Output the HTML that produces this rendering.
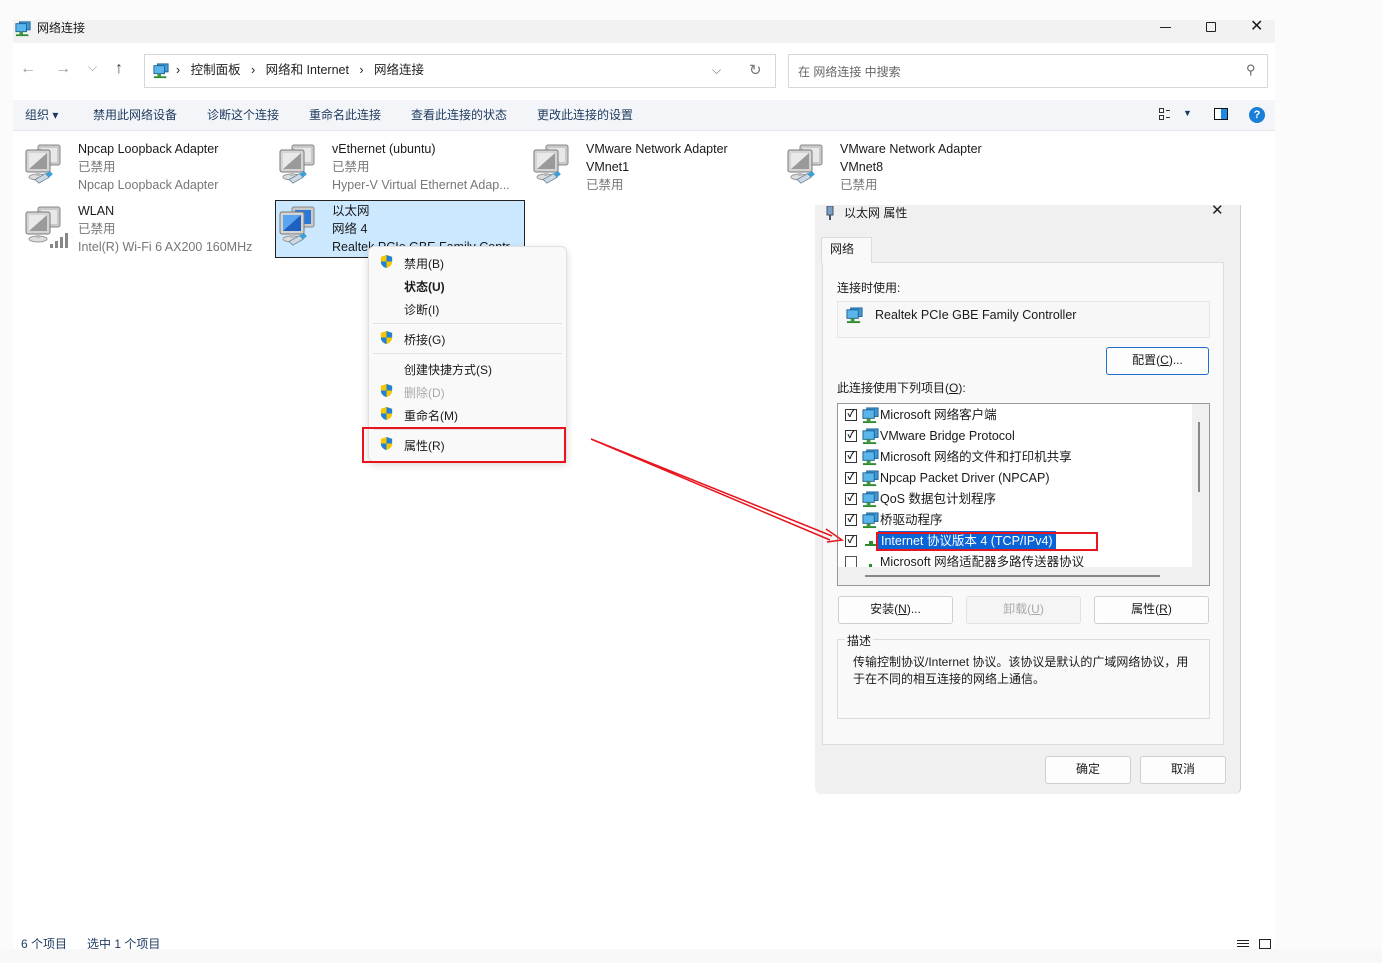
<!DOCTYPE html>
<html><head><meta charset="utf-8">
<style>
*{margin:0;padding:0;box-sizing:border-box}
body{width:1382px;height:963px;background:#fbfbfb;position:relative;overflow:hidden;font-family:"Liberation Sans","Noto Sans CJK SC",sans-serif;font-size:12px;color:#1a1a1a}
.a{position:absolute;white-space:nowrap}
#win{position:absolute;left:13px;top:20px;width:1262px;height:929px;background:#fff}
.g{color:#777}
.item{position:absolute;line-height:18px;font-size:12.5px}
.mi{position:absolute;left:404px;font-size:12px}
.sh{position:absolute;left:379px}
.btn{position:absolute;background:#fdfdfd;border:1px solid #cfcfcf;border-radius:3px;text-align:center;font-size:12px;line-height:25px}
.row{position:absolute;left:845px;font-size:12.5px;height:20px;line-height:20px}
.cb{position:absolute;left:0;top:4px;width:12px;height:12px;border:1px solid #333;background:#fff;font-size:10px;line-height:10px;text-align:center;font-weight:bold}
.ni{position:absolute;left:17px;top:2px}
.rt{position:absolute;left:35px;top:0}
.tb{position:absolute;top:107px;font-size:12px;line-height:17px;color:#1e3a5f}
</style></head><body>
<svg width="0" height="0" style="position:absolute">
<defs>
<symbol id="pc" viewBox="0 0 48 48">
<rect x="16" y="3" width="22" height="20" rx="2" fill="#c9c9c9" stroke="#888"/>
<rect x="19" y="6" width="16" height="14" fill="#e8e8e8"/>
<rect x="4" y="8" width="24" height="22" rx="2" fill="#d4d4d4" stroke="#777"/>
<rect x="7" y="11" width="18" height="16" fill="#9a9a9a"/>
<path d="M7 11h18L7 27z" fill="#e9e9e9"/>
<ellipse cx="16" cy="35" rx="9" ry="3" fill="#ddd" stroke="#999"/>
<rect x="14" y="30" width="4" height="4" fill="#bbb"/>
</symbol>
<symbol id="pcb" viewBox="0 0 48 48">
<rect x="16" y="3" width="22" height="20" rx="2" fill="#c9c9c9" stroke="#888"/>
<rect x="19" y="6" width="16" height="14" fill="#2b78d8"/>
<rect x="4" y="8" width="24" height="22" rx="2" fill="#d4d4d4" stroke="#777"/>
<rect x="7" y="11" width="18" height="16" fill="#1e5fbf"/>
<path d="M7 11h18L7 27z" fill="#5aa5f0"/>
<ellipse cx="16" cy="35" rx="9" ry="3" fill="#ddd" stroke="#999"/>
<rect x="14" y="30" width="4" height="4" fill="#bbb"/>
</symbol>
<symbol id="plug" viewBox="0 0 30 20">
<path d="M3 12l14-8 5 5-14 8z" fill="#cfd8e0" stroke="#5a7a95"/>
<path d="M17 4l7-3 3 4-5 4z" fill="#3aa0d8"/>
</symbol>
<symbol id="sh" viewBox="0 0 16 16">
<path d="M8 1l6 2v5c0 4-3 6-6 7-3-1-6-3-6-7V3z" fill="#f7c600"/>
<path d="M8 1l6 2v5H8zM8 8v7c-3-1-6-3-6-7h6z" fill="#1f82d8"/>
</symbol>
<symbol id="net" viewBox="0 0 18 18">
<rect x="5" y="1" width="12" height="9" fill="#3f9ad8" stroke="#1d5f96"/>
<rect x="1" y="3" width="12" height="9" fill="#5ab6ea" stroke="#1d5f96"/>
<rect x="5" y="12" width="4" height="3" fill="#3a9a3a"/>
<rect x="1" y="15" width="14" height="2" fill="#2d8a2d"/>
</symbol>
</defs></svg>

<div id="win"></div>
<div class="a" style="left:13px;top:20px;width:1262px;height:23px;background:#f2f2f2"></div>
<svg class="a" style="left:15px;top:21px" width="16" height="16"><use href="#net"/></svg>
<div class="a" style="left:37px;top:20px;line-height:16px;font-size:12px">网络连接</div>
<div class="a" style="left:1160px;top:27px;width:11px;height:1px;background:#222"></div>
<div class="a" style="left:1206px;top:22px;width:10px;height:10px;border:1px solid #222;border-radius:1px"></div>
<div class="a" style="left:1250px;top:18px;font-size:16px;line-height:18px">✕</div>

<div class="a" style="left:20px;top:60px;font-size:16px;color:#999">←</div>
<div class="a" style="left:55px;top:60px;font-size:16px;color:#999">→</div>
<div class="a" style="left:88px;top:60px;font-size:12px;color:#999">⌵</div>
<div class="a" style="left:115px;top:60px;font-size:16px;color:#444">↑</div>
<div class="a" style="left:144px;top:54px;width:632px;height:34px;border:1px solid #d8d8d8;background:#fff"></div>
<svg class="a" style="left:153px;top:63px" width="16" height="16"><use href="#net"/></svg>
<div class="a" style="left:176px;top:62px;font-size:12.5px;line-height:17px;color:#222">›&nbsp;&nbsp;&nbsp;控制面板&nbsp;&nbsp;&nbsp;›&nbsp;&nbsp;&nbsp;网络和 Internet&nbsp;&nbsp;&nbsp;›&nbsp;&nbsp;&nbsp;网络连接</div>
<div class="a" style="left:712px;top:63px;font-size:12px;color:#666">⌵</div>
<div class="a" style="left:749px;top:61px;font-size:15px;color:#777">↻</div>
<div class="a" style="left:788px;top:54px;width:480px;height:34px;border:1px solid #d8d8d8;background:#fff"></div>
<div class="a" style="left:798px;top:63px;font-size:12px;color:#666">在 网络连接 中搜索</div>
<div class="a" style="left:1246px;top:62px;font-size:13px;color:#666">⚲</div>

<div class="a" style="left:13px;top:100px;width:1262px;height:31px;background:#f3f5f8;border-bottom:1px solid #e6e8ec"></div>
<div class="tb" style="left:25px">组织 ▾</div>
<div class="tb" style="left:93px">禁用此网络设备</div>
<div class="tb" style="left:207px">诊断这个连接</div>
<div class="tb" style="left:309px">重命名此连接</div>
<div class="tb" style="left:411px">查看此连接的状态</div>
<div class="tb" style="left:537px">更改此连接的设置</div>
<div class="a" style="left:1159px;top:108px;width:5px;height:5px;border:1px solid #333"></div>
<div class="a" style="left:1159px;top:115px;width:5px;height:5px;border:1px solid #333"></div>
<div class="a" style="left:1166px;top:110px;width:4px;height:1px;background:#333"></div>
<div class="a" style="left:1166px;top:117px;width:4px;height:1px;background:#333"></div>
<div class="a" style="left:1183px;top:108px;font-size:9px;color:#1e3a5f">▼</div>
<div class="a" style="left:1214px;top:108px;width:14px;height:12px;border:1.5px solid #111;background:linear-gradient(90deg,#fff 50%,#1e88e5 50%)"></div>
<div class="a" style="left:1249px;top:107px;width:16px;height:16px;border-radius:50%;background:#1a7fd8;color:#fff;font-size:11px;line-height:16px;text-align:center;font-weight:bold">?</div>

<svg class="a" style="left:22px;top:142px" width="48" height="48"><use href="#pc"/></svg>
<svg class="a" style="left:33px;top:170px" width="22" height="16"><use href="#plug"/></svg>
<div class="item a" style="left:78px;top:140px">Npcap Loopback Adapter<br><span class="g">已禁用</span><br><span class="g">Npcap Loopback Adapter</span></div>

<svg class="a" style="left:276px;top:142px" width="48" height="48"><use href="#pc"/></svg>
<svg class="a" style="left:287px;top:170px" width="22" height="16"><use href="#plug"/></svg>
<div class="item a" style="left:332px;top:140px">vEthernet (ubuntu)<br><span class="g">已禁用</span><br><span class="g">Hyper-V Virtual Ethernet Adap...</span></div>

<svg class="a" style="left:530px;top:142px" width="48" height="48"><use href="#pc"/></svg>
<svg class="a" style="left:541px;top:170px" width="22" height="16"><use href="#plug"/></svg>
<div class="item a" style="left:586px;top:140px">VMware Network Adapter<br>VMnet1<br><span class="g">已禁用</span></div>

<svg class="a" style="left:784px;top:142px" width="48" height="48"><use href="#pc"/></svg>
<svg class="a" style="left:795px;top:170px" width="22" height="16"><use href="#plug"/></svg>
<div class="item a" style="left:840px;top:140px">VMware Network Adapter<br>VMnet8<br><span class="g">已禁用</span></div>

<svg class="a" style="left:22px;top:204px" width="48" height="48"><use href="#pc"/></svg>
<svg class="a" style="left:48px;top:232px" width="22" height="16"><rect x="2" y="12" width="3" height="4" fill="#888"/><rect x="7" y="9" width="3" height="7" fill="#888"/><rect x="12" y="5" width="3" height="11" fill="#888"/><rect x="17" y="1" width="3" height="15" fill="#888"/></svg>
<div class="item a" style="left:78px;top:202px">WLAN<br><span class="g">已禁用</span><br><span class="g">Intel(R) Wi-Fi 6 AX200 160MHz</span></div>

<div class="a" style="left:275px;top:200px;width:250px;height:58px;background:#cce8ff;border:1px solid #222"></div>
<svg class="a" style="left:276px;top:204px" width="48" height="48"><use href="#pcb"/></svg>
<svg class="a" style="left:287px;top:232px" width="22" height="16"><use href="#plug"/></svg>
<div class="item a" style="left:332px;top:202px">以太网<br>网络 4<br>Realtek PCIe GBE Family Contr</div>

<div class="a" style="left:368px;top:246px;width:199px;height:216px;background:#f9f9f9;border:1px solid #e0e0e0;border-radius:6px;box-shadow:0 3px 8px rgba(0,0,0,.15)"></div>
<svg class="sh" style="top:254px" width="15" height="15"><use href="#sh"/></svg>
<div class="mi a" style="top:255px">禁用(B)</div>
<div class="mi a" style="top:278px;font-weight:bold">状态(U)</div>
<div class="mi a" style="top:301px">诊断(I)</div>
<div class="a" style="left:373px;top:323px;width:189px;height:1px;background:#e2e2e2"></div>
<svg class="sh" style="top:330px" width="15" height="15"><use href="#sh"/></svg>
<div class="mi a" style="top:331px">桥接(G)</div>
<div class="a" style="left:373px;top:353px;width:189px;height:1px;background:#e2e2e2"></div>
<div class="mi a" style="top:361px">创建快捷方式(S)</div>
<svg class="sh" style="top:383px" width="15" height="15"><use href="#sh"/></svg>
<div class="mi a" style="top:384px;color:#aaa">删除(D)</div>
<svg class="sh" style="top:406px" width="15" height="15"><use href="#sh"/></svg>
<div class="mi a" style="top:407px">重命名(M)</div>
<div class="a" style="left:373px;top:429px;width:189px;height:1px;background:#e2e2e2"></div>
<svg class="sh" style="top:436px" width="15" height="15"><use href="#sh"/></svg>
<div class="mi a" style="top:437px">属性(R)</div>
<div class="a" style="left:362px;top:427px;width:204px;height:36px;border:2px solid #e8141e"></div>

<div class="a" style="left:815px;top:205px;width:426px;height:589px;background:#f0f0f0;border-right:1px solid #ccc;border-radius:0 0 6px 6px"></div>
<svg class="a" style="left:825px;top:206px" width="10" height="14"><rect x="2" y="0" width="6" height="9" fill="#7aa0c8" stroke="#456"/><rect x="4" y="9" width="2" height="5" fill="#456"/></svg>
<div class="a" style="left:844px;top:205px;font-size:12px;line-height:16px">以太网 属性</div>
<div class="a" style="left:1211px;top:202px;font-size:15px;line-height:18px;color:#222">✕</div>
<div class="a" style="left:822px;top:262px;width:402px;height:483px;background:#f9f9f9;border:1px solid #dcdcdc"></div>
<div class="a" style="left:821px;top:237px;width:51px;height:26px;background:#f9f9f9;border:1px solid #dcdcdc;border-bottom:none;font-size:12px;line-height:22px;padding-left:8px">网络</div>
<div class="a" style="left:837px;top:279px;font-size:12px">连接时使用:</div>
<div class="a" style="left:837px;top:301px;width:373px;height:37px;border:1px solid #e6e6e6;background:#f7f7f7"></div>
<svg class="a" style="left:846px;top:307px" width="17" height="17"><use href="#net"/></svg>
<div class="a" style="left:875px;top:308px;font-size:12.5px">Realtek PCIe GBE Family Controller</div>
<div class="btn" style="left:1106px;top:347px;width:103px;height:28px;border:1.5px solid #1a6fd0">配置(<u>C</u>)...</div>
<div class="a" style="left:837px;top:379px;font-size:12px">此连接使用下列项目(<u>O</u>):</div>
<div class="a" style="left:837px;top:403px;width:373px;height:183px;border:1px solid #999;background:#f0f0f0"></div>
<div class="a" style="left:838px;top:404px;width:354px;height:163px;background:#fff"></div>
<div class="a" style="left:1198px;top:422px;width:2px;height:70px;background:#888"></div>
<div class="a" style="left:865px;top:575px;width:295px;height:2px;background:#888"></div>

<div class="row" style="top:405px;width:340px"><div class="cb">✓</div><svg class="ni" width="17" height="17"><use href="#net"/></svg><span class="rt">Microsoft 网络客户端</span></div>
<div class="row" style="top:426px;width:340px"><div class="cb">✓</div><svg class="ni" width="17" height="17"><use href="#net"/></svg><span class="rt">VMware Bridge Protocol</span></div>
<div class="row" style="top:447px;width:340px"><div class="cb">✓</div><svg class="ni" width="17" height="17"><use href="#net"/></svg><span class="rt">Microsoft 网络的文件和打印机共享</span></div>
<div class="row" style="top:468px;width:340px"><div class="cb">✓</div><svg class="ni" width="17" height="17"><use href="#net"/></svg><span class="rt">Npcap Packet Driver (NPCAP)</span></div>
<div class="row" style="top:489px;width:340px"><div class="cb">✓</div><svg class="ni" width="17" height="17"><use href="#net"/></svg><span class="rt">QoS 数据包计划程序</span></div>
<div class="row" style="top:510px;width:340px"><div class="cb">✓</div><svg class="ni" width="17" height="17"><use href="#net"/></svg><span class="rt">桥驱动程序</span></div>
<div class="row" style="top:531px;width:340px"><div class="cb">✓</div><svg class="ni" width="17" height="17"><rect x="3" y="11" width="12" height="2" fill="#2d8a2d"/><rect x="7" y="8" width="4" height="4" fill="#2d8a2d"/></svg><span class="rt" style="background:#0a64d6;color:#fff;padding:0 3px;left:33px">Internet 协议版本 4 (TCP/IPv4)</span></div>
<div class="a" style="left:876px;top:532px;width:222px;height:19px;border:2px solid #e8141e"></div>
<div class="row" style="top:552px;width:340px;height:15px;overflow:hidden"><div class="cb" style="border-color:#555"></div><svg class="ni" width="17" height="17"><rect x="7" y="10" width="3" height="3" fill="#2d8a2d"/></svg><span class="rt">Microsoft 网络适配器多路传送器协议</span></div>

<div class="btn" style="left:838px;top:596px;width:115px;height:28px">安装(<u>N</u>)...</div>
<div class="btn" style="left:966px;top:596px;width:115px;height:28px;color:#aaa;border-color:#e2e2e2;background:#f5f5f5">卸载(<u>U</u>)</div>
<div class="btn" style="left:1094px;top:596px;width:115px;height:28px">属性(<u>R</u>)</div>
<div class="a" style="left:837px;top:639px;width:373px;height:80px;border:1px solid #ddd"></div>
<div class="a" style="left:845px;top:632px;font-size:12px;background:#f9f9f9;padding:0 2px">描述</div>
<div class="a" style="left:853px;top:654px;font-size:12px;line-height:17px">传输控制协议/Internet 协议。该协议是默认的广域网络协议，用<br>于在不同的相互连接的网络上通信。</div>
<div class="btn" style="left:1045px;top:756px;width:86px;height:28px">确定</div>
<div class="btn" style="left:1140px;top:756px;width:86px;height:28px">取消</div>

<div class="a" style="left:21px;top:936px;font-size:12px;line-height:16px;color:#1e3a5f;height:13px;overflow:hidden">6 个项目&nbsp;&nbsp;&nbsp;&nbsp;&nbsp;&nbsp;选中 1 个项目</div>
<div class="a" style="left:0;top:949px;width:1382px;height:14px;background:#f8f8f8"></div>
<div class="a" style="left:1237px;top:940px;width:12px;height:7px;border-top:1px solid #222;border-bottom:1px solid #222"></div>
<div class="a" style="left:1237px;top:943px;width:12px;height:1px;background:#222"></div>
<div class="a" style="left:1259px;top:939px;width:12px;height:10px;border:1px solid #222"></div>

<svg class="a" style="left:0;top:0" width="1382" height="963">
<path d="M591 439L832 536M591 439L830 540" stroke="#e8141e" stroke-width="1.5" fill="none"/>
<path d="M826 529L842 540L827 542" stroke="#e8141e" stroke-width="1.5" fill="none"/>
</svg>
</body></html>
